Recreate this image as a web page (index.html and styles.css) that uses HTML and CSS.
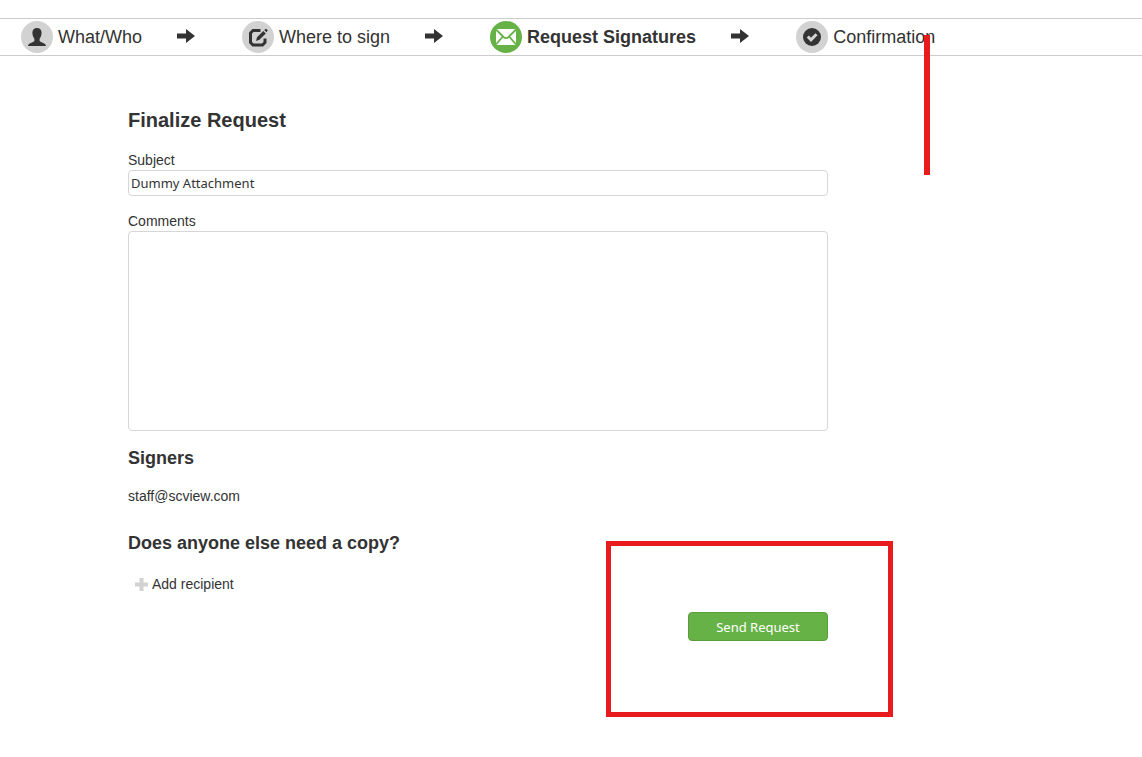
FILE: index.html
```html
<!DOCTYPE html>
<html lang="en">
<head>
<meta charset="utf-8">
<meta name="viewport" content="width=device-width, initial-scale=1">
<title>Finalize Request</title>
<link rel="stylesheet" href="styles.css">
</head>
<body>
<svg class="sprite" aria-hidden="true">
  <symbol id="arrow" viewBox="0 0 18 14"><path d="M0 4.500h9V0l9 7-9 7V9.500H0z"/></symbol>
</svg>
<nav class="steps" aria-label="Progress">
  <div class="step">
    <span class="badge"><svg viewBox="0 0 32 32"><path d="M16 7c-2.800 0-4.600 1.900-4.600 4.800 0 2.400.8 4.500 2 5.900v2.200c-1 1.400-6.400 2-6.400 5.100h18c0-3.100-5.400-3.700-6.400-5.100v-2.200c1.200-1.400 2-3.500 2-5.900C20.600 8.900 18.800 7 16 7z"/></svg></span>
    <span>What/Who</span>
  </div>
  <svg class="arrow"><use href="#arrow"/></svg>
  <div class="step">
    <span class="badge"><svg viewBox="0 0 32 32"><path d="M18.500 9.500H11L8.500 12v9.500l2.500 2.500h9.500l2.500-2.500v-4" fill="none" stroke="#333" stroke-width="3"/><path d="M14 20l1-3.800 6.300-6.300 2.500 2.500-6.300 6.400zM22.200 9l1.800-1.300 1.800 1.600-1.400 1.900z"/></svg></span>
    <span>Where to sign</span>
  </div>
  <svg class="arrow"><use href="#arrow"/></svg>
  <div class="step step-current" aria-current="step">
    <span class="badge"><svg viewBox="0 0 32 32"><path d="M6 8h20v16H6z"/><path d="M6 8.500l7.500 7.500q2.500 2.300 5 0L26 8.500M6 23.500l6.800-8M26 23.500l-6.800-8" fill="none" stroke="#67b246" stroke-width="1.800"/></svg></span>
    <span>Request Signatures</span>
  </div>
  <svg class="arrow"><use href="#arrow"/></svg>
  <div class="step">
    <span class="badge"><svg viewBox="0 0 32 32"><circle cx="16" cy="16" r="9"/><path d="M11.800 15.500l3.200 3.300 5.500-5.600" fill="none" stroke="#d2d2d2" stroke-width="3"/></svg></span>
    <span>Confirmation</span>
  </div>
</nav>
<main>
  <form class="request">
    <h1 class="title">Finalize Request</h1>
    <label class="label" for="subject">Subject</label>
    <input class="field" id="subject" type="text" value="Dummy Attachment">
    <label class="label label-comments" for="comments">Comments</label>
    <textarea class="field field-comments" id="comments"></textarea>
    <h2 class="heading">Signers</h2>
    <p class="signer">staff@scview.com</p>
    <h2 class="heading heading-copy">Does anyone else need a copy?</h2>
    <button class="add" type="button"><svg class="plus" viewBox="0 0 13 13"><path d="M4.500 0h4v4.500H13v4H8.500V13h-4V8.500H0v-4h4.500z"/></svg>Add recipient</button>
    <button class="send" type="submit">Send Request</button>
  </form>
</main>
<div class="mark mark-line"></div>
<div class="mark mark-box"></div>
</body>
</html>
```
FILE: styles.css
```css
* { box-sizing: border-box; }

body {
  position: relative;
  min-height: 100vh;
  margin: 0;
  padding-top: 18px;
  background: #fff;
  color: #333;
  font: 14px/16px "Liberation Sans", Arial, sans-serif;
}

.sprite { position: absolute; width: 0; height: 0; }

.steps {
  display: flex;
  align-items: center;
  padding: 2px 21px;
  border-top: 1px solid #ccc;
  border-bottom: 1px solid #ccc;
  font-size: 18px;
  line-height: 32px;
  white-space: nowrap;
}

.step { display: flex; align-items: center; gap: 5px; }
.step-current { font-weight: bold; }

.badge {
  width: 32px;
  height: 32px;
  border-radius: 50%;
  background: #d2d2d2;
  fill: #333;
}
.badge svg { display: block; }
.step-current .badge { background: #67b246; fill: #fff; }

.arrow {
  flex: none;
  width: 18px;
  height: 14px;
  margin: 0 47px 2px 35px;
  fill: #333;
}

.request {
  display: flex;
  flex-direction: column;
  max-width: 828px;
  padding: 52px 0 40px 128px;
}

.title { margin: 0 0 20px; font-size: 20px; line-height: 24px; }

.label { margin-bottom: 2px; }
.label-comments { margin-top: 17px; }

.field {
  width: 100%;
  height: 26px;
  padding: 0 2px;
  border: 1px solid #d6d6d6;
  border-radius: 4px;
  background: #fff;
  color: #333;
  font: 13px/20px "Noto Sans", "Open Sans", sans-serif;
}
.field-comments { height: 200px; resize: none; }

.heading { margin: 17px 0 20px; font-size: 18px; line-height: 20px; }
.heading-copy { margin: 29px 0 23px; }
.signer { margin: 0; }

.add {
  display: flex;
  align-items: center;
  align-self: flex-start;
  gap: 4px;
  padding: 0 0 0 7px;
  border: 0;
  background: none;
  color: inherit;
  font: inherit;
}
.plus { width: 13px; height: 13px; fill: #d2d2d2; }

.send {
  align-self: flex-end;
  width: 140px;
  height: 29px;
  margin-top: 20px;
  padding: 0;
  border: 1px solid #5a9e3c;
  border-radius: 4px;
  background: #67b246;
  color: #fff;
  font: 13px/20px "Noto Sans", "Open Sans", sans-serif;
}

/* Annotations drawn over the page */
.mark { position: absolute; pointer-events: none; }
.mark-line { left: 924px; top: 35px; width: 6px; height: 140px; background: #e81c1c; }
.mark-box { left: 606px; top: 541px; width: 287px; height: 176px; border: 5px solid #e81c1c; }
```
